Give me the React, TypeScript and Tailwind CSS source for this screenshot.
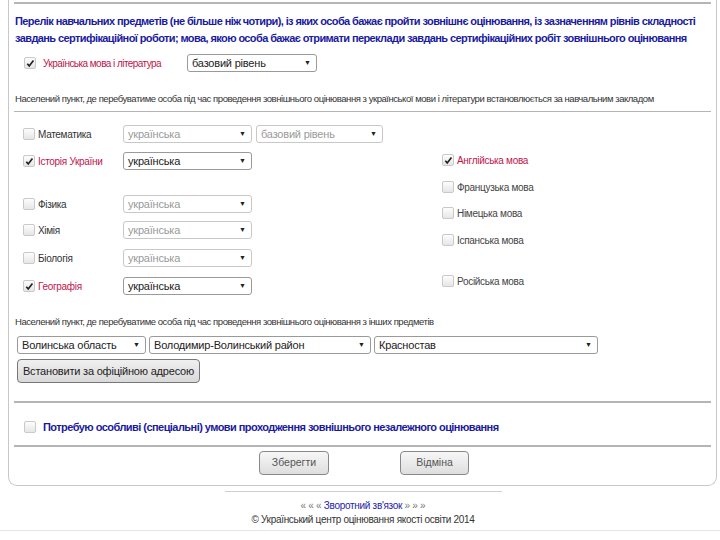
import React from "react";

const Box = ({ checked }: { checked?: boolean }) => (
  <span className="relative inline-block w-[12px] h-[12px] shrink-0 rounded-[2px] border border-[#c9c9c9] bg-gradient-to-b from-[#fdfdfd] to-[#e6e6e6]">
    {checked && (
      <svg viewBox="0 0 12 12" className="absolute left-[0px] top-[0px] w-[11px] h-[11px]">
        <path d="M2.5 6.2 L4.6 8.6 L9.2 2.6" stroke="#222" strokeWidth="1.8" fill="none" />
      </svg>
    )}
  </span>
);

const Select = ({ text, w, disabled }: { text: string; w: string; disabled?: boolean }) => (
  <div
    className={`flex items-center justify-between h-[18px] rounded-[3px] border px-[4px] text-[11px] ${w} ${
      disabled ? "border-[#c8c8c8] text-[#9a9a9a]" : "border-[#9a9a9a] text-[#222]"
    }`}
  >
    <span className="tracking-[-0.2px] whitespace-nowrap">{text}</span>
    <span className="text-[7px] text-[#222] pr-[1px]">▼</span>
  </div>
);

const Subj = ({ label, checked }: { label: string; checked?: boolean }) => (
  <div className="flex items-center w-[105px] pl-[9px]">
    <Box checked={checked} />
    <span className={`ml-[3px] text-[10px] tracking-[-0.3px] whitespace-nowrap ${checked ? "text-[#c0154b]" : "text-[#333]"}`}>{label}</span>
  </div>
);

const Lang = ({ label, checked }: { label: string; checked?: boolean }) => (
  <div className="flex items-center h-[18px]">
    <Box checked={checked} />
    <span className={`ml-[3px] text-[10px] tracking-[-0.3px] whitespace-nowrap ${checked ? "text-[#c0154b]" : "text-[#444]"}`}>{label}</span>
  </div>
);

export default function App() {
  return (
    <div className="w-[720px] h-[540px] bg-white overflow-hidden font-['Liberation_Sans',Arial,sans-serif] text-[#222]">
      <div className="ml-[8px] w-[709px] h-[486px] border-x border-b border-[#c8c8c8] rounded-b-[9px] px-[5px] flex flex-col">
        <div className="mt-[2px] border-t-2 border-[#b5b5b5]" />
        <div className="mt-[9px] text-[11px] leading-[17px] font-bold text-[#1a1aa0] tracking-[-0.6px] pl-[1px] whitespace-nowrap">
          <div>Перелік навчальних предметів (не більше ніж чотири), із яких особа бажає пройти зовнішнє оцінювання, із зазначенням рівнів складності</div>
          <div>завдань сертифікаційної роботи; мова, якою особа бажає отримати переклади завдань сертифікаційних робіт зовнішнього оцінювання</div>
        </div>
        <div className="mt-[7px] flex items-center h-[18px]">
          <div className="flex items-center w-[173px] pl-[10px]">
            <Box checked />
            <span className="ml-[7px] text-[10px] tracking-[-0.55px] text-[#c0154b] whitespace-nowrap">Українська мова і література</span>
          </div>
          <Select text="базовий рівень" w="w-[130px]" />
        </div>
        <div className="mt-[21px] text-[9.5px] tracking-[-0.45px] text-[#333] pl-[1px] leading-[12px] whitespace-nowrap">
          Населений пункт, де перебуватиме особа під час проведення зовнішнього оцінювання з української мови і літератури встановлюється за навчальним закладом
        </div>
        <div className="mt-[6px] border-t border-[#b5b5b5]" />
        <div className="mt-[13px] flex">
          <div className="flex flex-col w-[428px]">
            <div className="flex items-center gap-[4px] h-[18px]">
              <Subj label="Математика" />
              <Select text="українська" w="w-[129px]" disabled />
              <Select text="базовий рівень" w="w-[127px]" disabled />
            </div>
            <div className="flex items-center gap-[4px] h-[18px] mt-[9px]">
              <Subj label="Історія України" checked />
              <Select text="українська" w="w-[129px]" />
            </div>
            <div className="flex items-center gap-[4px] h-[18px] mt-[25px]">
              <Subj label="Фізика" />
              <Select text="українська" w="w-[129px]" disabled />
            </div>
            <div className="flex items-center gap-[4px] h-[18px] mt-[8px]">
              <Subj label="Хімія" />
              <Select text="українська" w="w-[129px]" disabled />
            </div>
            <div className="flex items-center gap-[4px] h-[18px] mt-[10px]">
              <Subj label="Біологія" />
              <Select text="українська" w="w-[129px]" disabled />
            </div>
            <div className="flex items-center gap-[4px] h-[18px] mt-[10px]">
              <Subj label="Географія" checked />
              <Select text="українська" w="w-[129px]" />
            </div>
          </div>
          <div className="flex flex-col pt-[26px]">
            <Lang label="Англійська мова" checked />
            <div className="mt-[9px]"><Lang label="Французька мова" /></div>
            <div className="mt-[8px]"><Lang label="Німецька мова" /></div>
            <div className="mt-[9px]"><Lang label="Іспанська мова" /></div>
            <div className="mt-[23px]"><Lang label="Російська мова" /></div>
          </div>
        </div>
        <div className="mt-[21px] text-[9.5px] tracking-[-0.45px] text-[#333] pl-[1px] leading-[12px] whitespace-nowrap">
          Населений пункт, де перебуватиме особа під час проведення зовнішнього оцінювання з інших предметів
        </div>
        <div className="mt-[8px] flex gap-[3px] pl-[3px]">
          <Select text="Волинська область" w="w-[129px]" />
          <Select text="Володимир-Волинський район" w="w-[222px]" />
          <Select text="Красностав" w="w-[224px]" />
        </div>
        <div className="mt-[4px] pl-[3px]">
          <button className="h-[24px] w-[183px] rounded-[4px] border border-[#777] bg-gradient-to-b from-[#f0f0f0] to-[#d9d9d9] text-[11px] tracking-[-0.2px] text-[#222] whitespace-nowrap">
            Встановити за офіційною адресою
          </button>
        </div>
        <div className="mt-[18px] border-t-2 border-[#b5b5b5]" />
        <div className="mt-[17px] flex items-center pl-[10px] h-[14px]">
          <Box />
          <span className="ml-[7px] text-[11px] font-bold text-[#1a1aa0] tracking-[-0.55px] whitespace-nowrap">
            Потребую особливі (спеціальні) умови проходження зовнішнього незалежного оцінювання
          </span>
        </div>
        <div className="mt-[11px] border-t-2 border-[#b5b5b5]" />
        <div className="mt-[4px] flex">
          <button className="ml-[245px] h-[24px] w-[70px] rounded-[4px] border border-[#888] bg-gradient-to-b from-[#f7f7f7] to-[#dedede] text-[10.5px] text-[#555]">
            Зберегти
          </button>
          <button className="ml-[71px] h-[24px] w-[69px] rounded-[4px] border border-[#888] bg-gradient-to-b from-[#f7f7f7] to-[#dedede] text-[10.5px] text-[#555]">
            Відміна
          </button>
        </div>
      </div>
      <div className="mt-[5px] ml-[225px] w-[277px] border-t border-[#cfcfcf]" />
      <div className="mt-[7px] text-center w-[726px] text-[10px] leading-[14px] tracking-[-0.3px]">
        <div>
          <span className="text-[#777]">« « « </span>
          <span className="text-[#2424a8]">Зворотний зв'язок</span>
          <span className="text-[#777]"> » » »</span>
        </div>
        <div className="text-[#333]">© Український центр оцінювання якості освіти 2014</div>
      </div>
      <div className="mt-[3px] border-t border-[#e4e4e4]" />
    </div>
  );
}
